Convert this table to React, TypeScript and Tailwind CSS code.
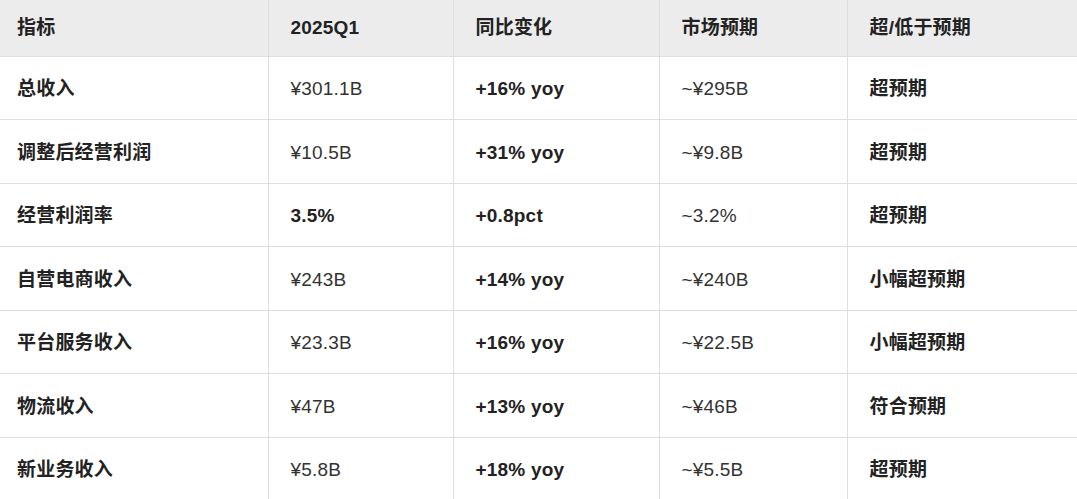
const rows: [string, string, string, string, string, boolean?][] = [
  ["总收入", "¥301.1B", "+16% yoy", "~¥295B", "超预期"],
  ["调整后经营利润", "¥10.5B", "+31% yoy", "~¥9.8B", "超预期"],
  ["经营利润率", "3.5%", "+0.8pct", "~3.2%", "超预期", true],
  ["自营电商收入", "¥243B", "+14% yoy", "~¥240B", "小幅超预期"],
  ["平台服务收入", "¥23.3B", "+16% yoy", "~¥22.5B", "小幅超预期"],
  ["物流收入", "¥47B", "+13% yoy", "~¥46B", "符合预期"],
  ["新业务收入", "¥5.8B", "+18% yoy", "~¥5.5B", "超预期"],
];

const headers = ["指标", "2025Q1", "同比变化", "市场预期", "超/低于预期"];

export default function App() {
  return (
    <div
      className="w-[1077px] h-[499px] overflow-hidden bg-white text-[19px] tracking-[0.2px] text-[#222]"
      style={{ fontFamily: '"Liberation Sans", "Noto Sans CJK SC", sans-serif' }}
    >
      <table className="w-[1077px] table-fixed border-collapse">
        <colgroup>
          <col className="w-[268px]" />
          <col className="w-[185px]" />
          <col className="w-[206px]" />
          <col className="w-[188px]" />
          <col className="w-[230px]" />
        </colgroup>
        <thead>
          <tr className="h-[56px] bg-[#ececec]">
            {headers.map((h, i) => (
              <th
                key={h}
                className={`text-left font-semibold pt-[1px] border-b border-[#dedede] ${
                  i === 0 ? "pl-[17px]" : "pl-[22px] border-l"
                } ${i === 4 ? "border-r" : ""}`}
              >
                {h}
              </th>
            ))}
          </tr>
        </thead>
        <tbody>
          {rows.map((r) => (
            <tr key={r[0]} className="h-[63.5px]">
              <td className="pl-[17px] pt-[3px] font-semibold border-b border-[#dedede]">{r[0]}</td>
              <td
                className={`pl-[22px] pt-[3px] border-l border-b border-[#dedede] ${
                  r[5] ? "font-semibold" : "text-[#333]"
                }`}
              >
                {r[1]}
              </td>
              <td className="pl-[22px] pt-[3px] font-semibold border-l border-b border-[#dedede]">{r[2]}</td>
              <td className="pl-[22px] pt-[3px] text-[#333] border-l border-b border-[#dedede]">{r[3]}</td>
              <td className="pl-[22px] pt-[3px] font-semibold border-l border-r border-b border-[#dedede]">
                {r[4]}
              </td>
            </tr>
          ))}
        </tbody>
      </table>
    </div>
  );
}
